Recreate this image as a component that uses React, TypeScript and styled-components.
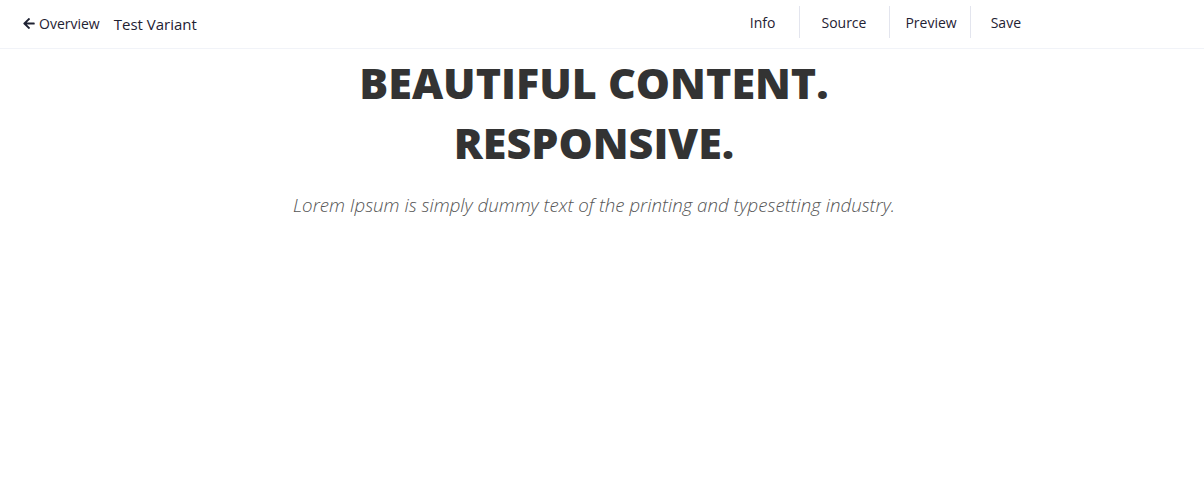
import { createGlobalStyle, styled } from "styled-components";

const GlobalStyle = createGlobalStyle`
  html, body {
    margin: 0;
    padding: 0;
    background: #ffffff;
    font-family: "Open Sans", "Liberation Sans", sans-serif;
  }
  * {
    box-sizing: border-box;
  }
`;

const navItems = [
  { label: "Info", pad: "0 24px 0 20px", divider: false },
  { label: "Source", pad: "0 23px 0 21px", divider: true },
  { label: "Preview", pad: "0 13px 0 15px", divider: true },
  { label: "Save", pad: "0 20px 0 20px", divider: true },
];

const App = () => {
  return (
    <>
      <GlobalStyle />
      <Page>
        <TopBar>
          <div className="left">
            <BackLink href="#">
              <svg viewBox="0 0 448 512" aria-hidden="true">
                <path
                  fill="currentColor"
                  d="M257.5 445.1l-22.2 22.2c-9.4 9.4-24.6 9.4-33.9 0L7 273c-9.4-9.4-9.4-24.6 0-33.9L201.4 44.7c9.4-9.4 24.6-9.4 33.9 0l22.2 22.2c9.5 9.5 9.3 25-.4 34.3L136.6 216H424c13.3 0 24 10.7 24 24v32c0 13.3-10.7 24-24 24H136.6l120.5 114.8c9.8 9.3 10 24.8.4 34.3z"
                />
              </svg>
              Overview
            </BackLink>
            <Title>Test Variant</Title>
          </div>
          <Nav>
            {navItems.map((item) => (
              <NavItem key={item.label} $pad={item.pad} $divider={item.divider}>
                {item.label}
              </NavItem>
            ))}
          </Nav>
        </TopBar>
        <Hero>
          <h1 className="headline">
            BEAUTIFUL CONTENT.
            <br />
            RESPONSIVE.
          </h1>
          <p className="lead">
            Lorem Ipsum is simply dummy text of the printing and typesetting industry.
          </p>
        </Hero>
      </Page>
    </>
  );
};

export default App;

const Page = styled.div`
  width: 100%;
  min-height: 504px;
  background: #ffffff;
`;

const TopBar = styled.header`
  display: flex;
  align-items: center;
  justify-content: space-between;
  height: 49px;
  padding: 0 163px 4px 23px;
  border-bottom: 1px solid #f1f3f8;
  .left {
    display: flex;
    align-items: center;
    gap: 14px;
    padding-top: 3px;
  }
`;

const BackLink = styled.a`
  display: flex;
  align-items: center;
  gap: 4px;
  color: #1f2233;
  font-size: 14px;
  text-decoration: none;
  svg {
    width: 12px;
    height: 13px;
  }
`;

const Title = styled.span`
  color: #1f2233;
  font-size: 15px;
`;

const Nav = styled.nav`
  display: flex;
  align-items: stretch;
  height: 32px;
`;

const NavItem = styled.button<{ $pad: string; $divider: boolean }>`
  display: flex;
  align-items: center;
  padding: ${(p) => p.$pad};
  border: none;
  border-left: ${(p) => (p.$divider ? "1px solid #e3e5ee" : "none")};
  background: transparent;
  color: #1f2233;
  font-family: "Open Sans", "Liberation Sans", sans-serif;
  font-size: 14px;
  cursor: pointer;
`;

const Hero = styled.section`
  display: flex;
  flex-direction: column;
  align-items: center;
  padding: 4px 16px 0 0;
  text-align: center;
  .headline {
    margin: 0;
    color: #333333;
    font-family: "Open Sans", "Liberation Sans", sans-serif;
    font-size: 43px;
    font-weight: 800;
    line-height: 60px;
  }
  .lead {
    margin: 19px 0 0;
    color: #555555;
    font-family: "Open Sans", "Liberation Sans", sans-serif;
    font-size: 18.7px;
    font-style: italic;
    font-weight: 300;
  }
`;
